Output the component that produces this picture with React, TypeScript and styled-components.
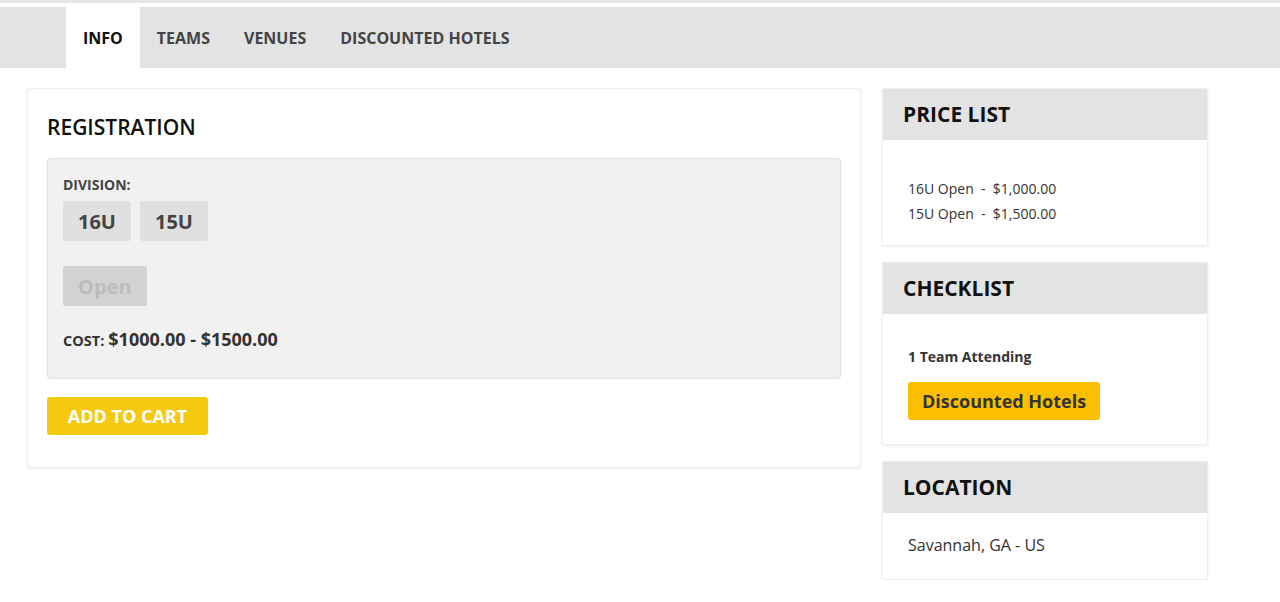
import React from "react";
import styled, { createGlobalStyle } from "styled-components";

const Global = createGlobalStyle`
  html, body { margin: 0; padding: 0; background: #fff; }
  body { font-family: "Open Sans", "Liberation Sans", sans-serif; color: #333; }
  * { box-sizing: border-box; }
`;

const TopLine = styled.div`
  height: 3px;
  background: #e6e6e6;
  margin-bottom: 4px;
`;

const TabBar = styled.nav`
  display: flex;
  height: 61px;
  background: #e3e3e3;
  padding-left: 66px;
`;

const Tab = styled.div<{ $active?: boolean }>`
  display: flex;
  align-items: center;
  padding: 0 17px;
  font-size: 16px;
  font-weight: 700;
  text-transform: uppercase;
  color: ${(p) => (p.$active ? "#111" : "#444")};
  background: ${(p) => (p.$active ? "#fff" : "transparent")};
`;

const Page = styled.div`
  display: flex;
  align-items: flex-start;
  gap: 21px;
  padding: 20px 0 0 27px;
`;

const MainCard = styled.section`
  width: 834px;
  background: #fff;
  border: 1px solid #eeeeee;
  border-radius: 2px;
  box-shadow: 0 1px 3px rgba(0, 0, 0, 0.06);
  padding: 24px 19px 32px 19px;
`;

const Heading = styled.h2`
  margin: 0 0 17px 0;
  font-size: 21px;
  font-weight: 600;
  color: #111;
  line-height: 28px;
`;

const OptionsBox = styled.div`
  background: #f1f1f1;
  border: 1px solid #e2e2e2;
  border-radius: 3px;
  padding: 15px 15px 27px 15px;
`;

const Label = styled.div`
  font-size: 14px;
  font-weight: 700;
  color: #444;
  line-height: 22px;
  margin-bottom: 5px;
`;

const ChoiceRow = styled.div<{ $after: number }>`
  display: flex;
  gap: 9px;
  margin-bottom: ${(p) => p.$after}px;
`;

const Choice = styled.div<{ $disabled?: boolean }>`
  height: 40px;
  padding: 0 15px;
  display: flex;
  align-items: center;
  border-radius: 2px;
  font-size: 20px;
  font-weight: 700;
  background: ${(p) => (p.$disabled ? "#d2d2d2" : "#e0e0e0")};
  color: ${(p) => (p.$disabled ? "#bcbcbc" : "#444")};
`;

const CostLine = styled.div`
  display: flex;
  align-items: baseline;
  gap: 4px;
  color: #333;
`;

const CostLabel = styled.span`
  font-size: 14.5px;
  font-weight: 700;
  text-transform: uppercase;
`;

const CostValue = styled.span`
  font-size: 18px;
  font-weight: 700;
`;

const CartButton = styled.button`
  display: block;
  margin-top: 18px;
  width: 161px;
  height: 38px;
  border: none;
  border-radius: 3px;
  background: #f6c90e;
  color: #fff;
  font-family: inherit;
  font-size: 18px;
  font-weight: 700;
  text-transform: uppercase;
  padding: 0;
`;

const Sidebar = styled.aside`
  width: 326px;
  display: flex;
  flex-direction: column;
  gap: 16px;
`;

const SideCard = styled.div`
  background: #fff;
  border: 1px solid #efefef;
  box-shadow: 0 1px 3px rgba(0, 0, 0, 0.07);
`;

const SideHeader = styled.div`
  height: 51px;
  background: #e3e3e3;
  display: flex;
  align-items: center;
  padding: 0 20px 2px 20px;
  font-size: 21px;
  font-weight: 700;
  color: #111;
`;

const SideBody = styled.div<{ $pad: string }>`
  padding: ${(p) => p.$pad};
  font-size: 14px;
  color: #333;
`;

const PriceLine = styled.div`
  line-height: 25px;
`;

const Attending = styled.div`
  font-weight: 700;
  line-height: 20px;
  margin-bottom: 15px;
`;

const HotelButton = styled.div`
  display: inline-flex;
  align-items: center;
  height: 38px;
  padding: 0 14px;
  background: #fbbf00;
  border-radius: 3px;
  font-size: 18px;
  font-weight: 700;
  color: #333;
`;

const Location = styled.div`
  font-size: 16px;
  line-height: 24px;
`;

export default function App() {
  return (
    <>
      <Global />
      <TopLine />
      <TabBar>
        <Tab $active>Info</Tab>
        <Tab>Teams</Tab>
        <Tab>Venues</Tab>
        <Tab>Discounted Hotels</Tab>
      </TabBar>
      <Page>
        <MainCard>
          <Heading>REGISTRATION</Heading>
          <OptionsBox>
            <Label>DIVISION:</Label>
            <ChoiceRow $after={25}>
              <Choice>16U</Choice>
              <Choice>15U</Choice>
            </ChoiceRow>
            <ChoiceRow $after={21}>
              <Choice $disabled>Open</Choice>
            </ChoiceRow>
            <CostLine>
              <CostLabel>Cost:</CostLabel>
              <CostValue>$1000.00 - $1500.00</CostValue>
            </CostLine>
          </OptionsBox>
          <CartButton>Add to cart</CartButton>
        </MainCard>
        <Sidebar>
          <SideCard>
            <SideHeader>PRICE LIST</SideHeader>
            <SideBody $pad="36px 25px 19px 25px">
              <PriceLine>16U Open&nbsp; - &nbsp;$1,000.00</PriceLine>
              <PriceLine>15U Open&nbsp; - &nbsp;$1,500.00</PriceLine>
            </SideBody>
          </SideCard>
          <SideCard>
            <SideHeader>CHECKLIST</SideHeader>
            <SideBody $pad="33px 25px 24px 25px">
              <Attending>1 Team Attending</Attending>
              <HotelButton>Discounted Hotels</HotelButton>
            </SideBody>
          </SideCard>
          <SideCard>
            <SideHeader>LOCATION</SideHeader>
            <SideBody $pad="20px 25px 22px 25px">
              <Location>Savannah, GA - US</Location>
            </SideBody>
          </SideCard>
        </Sidebar>
      </Page>
    </>
  );
}
